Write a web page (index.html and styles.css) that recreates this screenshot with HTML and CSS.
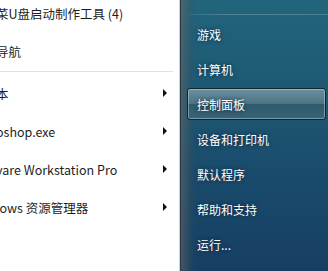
FILE: index.html
```html
<!DOCTYPE html>
<html lang="en">

<head>
    <meta charset="UTF-8">
    <title>Start Menu</title>
    <link rel="stylesheet" href="styles.css">
</head>

<body>
    <div class="menu">
        <div class="programs">
            <ul class="list top">
                <li class="item"><span class="label">菜U盘启动制作工具 (4)</span></li>
                <li class="item"><span class="label">导航</span></li>
            </ul>
            <div class="divider"></div>
            <ul class="list">
                <li class="item"><span class="label">本</span><span class="arrow"></span></li>
                <li class="item"><span class="label">oshop.exe</span><span class="arrow"></span></li>
                <li class="item"><span class="label">vare Workstation Pro</span><span class="arrow"></span></li>
                <li class="item"><span class="label">lows 资源管理器</span><span class="arrow"></span></li>
            </ul>
        </div>
        <div class="places">
            <div class="rule"></div>
            <ul class="links">
                <li class="link">游戏</li>
                <li class="link">计算机</li>
                <li class="link active">控制面板</li>
                <li class="link">设备和打印机</li>
                <li class="link">默认程序</li>
                <li class="link">帮助和支持</li>
                <li class="link">运行...</li>
            </ul>
        </div>
    </div>
</body>

</html>
```

FILE: styles.css
```css
body {
    margin: 0;
    padding: 0;
    font-family: "Noto Sans CJK SC", "Noto Sans", sans-serif;
    font-size: 12.5px;
    overflow: hidden;
}

.menu {
    display: flex;
    width: 328px;
    height: 271px;
}

.programs {
    width: 179px;
    background-color: #fff;
    border-right: 1px solid #c9d2d9;
    overflow: hidden;
}

.list {
    list-style: none;
    margin: 0;
    padding: 0;
}

.list.top {
    margin-top: -6px;
}

.item {
    height: 38px;
    display: flex;
    align-items: center;
    justify-content: space-between;
    color: #1e1e1e;
    padding-right: 12px;
}

.label {
    margin-left: -4px;
    white-space: nowrap;
}

.divider {
    height: 1px;
    margin: 1px 6px 2px 0;
    background-color: #dce3e8;
}

.arrow {
    width: 0;
    height: 0;
    border-top: 4px solid transparent;
    border-bottom: 4px solid transparent;
    border-left: 4px solid #111;
}

.places {
    flex: 1;
    font-size: 12px;
    border-left: 1px solid #26394a;
    background:
        linear-gradient(to right, rgba(110, 100, 92, 0.55), rgba(60, 80, 90, 0.2) 10px, transparent 16px),
        linear-gradient(to bottom, #22657c, #1d5873 35%, #1a4b6c 65%, #163f63);
}

.rule {
    height: 1px;
    margin: 14px 0 0 8px;
    background: linear-gradient(to right, rgba(255, 255, 255, 0.08), rgba(255, 255, 255, 0.22) 30%, rgba(255, 255, 255, 0.18));
}

.links {
    list-style: none;
    margin: 0;
    padding: 0;
}

.link {
    height: 30px;
    margin: 3px 2px 3px 6px;
    padding-left: 9px;
    display: flex;
    align-items: center;
    color: #fff;
    text-shadow: 0 0 4px rgba(0, 20, 40, 0.8);
    border: 1px solid transparent;
    border-radius: 3px;
}

.link.active {
    border-color: #14232e;
    box-shadow: inset 0 0 0 1px rgba(200, 225, 235, 0.45);
    background: linear-gradient(to bottom, #6a909e, #4c7586 48%, #2f5a6d 52%, #3a6476);
}
```
